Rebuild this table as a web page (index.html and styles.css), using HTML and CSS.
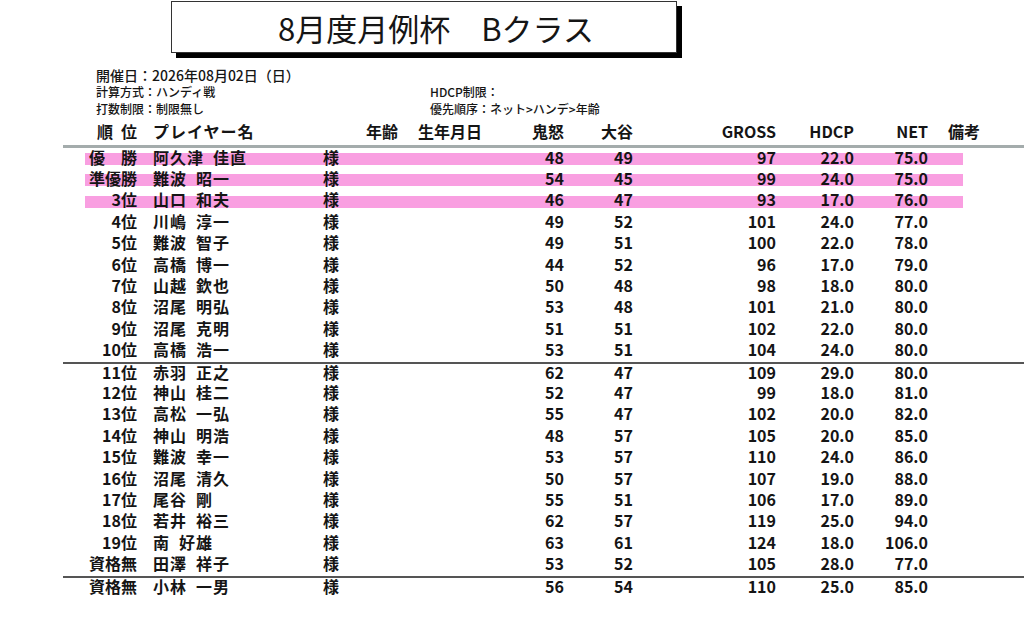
FILE: index.html
```html
<!DOCTYPE html>
<html lang="ja">
<head>
<meta charset="utf-8">
<title>8月度月例杯 Bクラス</title>
<link rel="stylesheet" href="styles.css">
</head>
<body>
<div class="title-wrap"><div class="title">8月度月例杯　Bクラス</div></div>
<div class="info">
  <div class="date">開催日：2026年08月02日（日）</div>
  <div class="meta">
    <div>計算方式：ハンディ戦</div><div>HDCP制限：</div>
    <div>打数制限：制限無し</div><div>優先順序：ネット&gt;ハンデ&gt;年齢</div>
  </div>
</div>
<div class="table">
  <div class="row head">
    <span class="r">順&ensp;位</span><span class="nm">プレイヤー名</span><span></span><span>年齢</span><span>生年月日</span><span class="r">鬼怒</span><span class="r">大谷</span><span class="r">GROSS</span><span class="r">HDCP</span><span class="r">NET</span><span class="note">備考</span>
  </div>
  <div class="row win"><span class="r">優　勝</span><span class="nm">阿久津&ensp;佳直</span><span>様</span><span></span><span></span><span class="r n">48</span><span class="r n">49</span><span class="r n">97</span><span class="r n">22.0</span><span class="r n">75.0</span><span></span></div>
  <div class="row win"><span class="r">準優勝</span><span class="nm">難波&ensp;昭一</span><span>様</span><span></span><span></span><span class="r n">54</span><span class="r n">45</span><span class="r n">99</span><span class="r n">24.0</span><span class="r n">75.0</span><span></span></div>
  <div class="row win"><span class="r">3位</span><span class="nm">山口&ensp;和夫</span><span>様</span><span></span><span></span><span class="r n">46</span><span class="r n">47</span><span class="r n">93</span><span class="r n">17.0</span><span class="r n">76.0</span><span></span></div>
  <div class="row"><span class="r">4位</span><span class="nm">川嶋&ensp;淳一</span><span>様</span><span></span><span></span><span class="r n">49</span><span class="r n">52</span><span class="r n">101</span><span class="r n">24.0</span><span class="r n">77.0</span><span></span></div>
  <div class="row"><span class="r">5位</span><span class="nm">難波&ensp;智子</span><span>様</span><span></span><span></span><span class="r n">49</span><span class="r n">51</span><span class="r n">100</span><span class="r n">22.0</span><span class="r n">78.0</span><span></span></div>
  <div class="row"><span class="r">6位</span><span class="nm">高橋&ensp;博一</span><span>様</span><span></span><span></span><span class="r n">44</span><span class="r n">52</span><span class="r n">96</span><span class="r n">17.0</span><span class="r n">79.0</span><span></span></div>
  <div class="row"><span class="r">7位</span><span class="nm">山越&ensp;欽也</span><span>様</span><span></span><span></span><span class="r n">50</span><span class="r n">48</span><span class="r n">98</span><span class="r n">18.0</span><span class="r n">80.0</span><span></span></div>
  <div class="row"><span class="r">8位</span><span class="nm">沼尾&ensp;明弘</span><span>様</span><span></span><span></span><span class="r n">53</span><span class="r n">48</span><span class="r n">101</span><span class="r n">21.0</span><span class="r n">80.0</span><span></span></div>
  <div class="row"><span class="r">9位</span><span class="nm">沼尾&ensp;克明</span><span>様</span><span></span><span></span><span class="r n">51</span><span class="r n">51</span><span class="r n">102</span><span class="r n">22.0</span><span class="r n">80.0</span><span></span></div>
  <div class="row"><span class="r">10位</span><span class="nm">高橋&ensp;浩一</span><span>様</span><span></span><span></span><span class="r n">53</span><span class="r n">51</span><span class="r n">104</span><span class="r n">24.0</span><span class="r n">80.0</span><span></span></div>
  <div class="row sep"><span class="r">11位</span><span class="nm">赤羽&ensp;正之</span><span>様</span><span></span><span></span><span class="r n">62</span><span class="r n">47</span><span class="r n">109</span><span class="r n">29.0</span><span class="r n">80.0</span><span></span></div>
  <div class="row"><span class="r">12位</span><span class="nm">神山&ensp;桂二</span><span>様</span><span></span><span></span><span class="r n">52</span><span class="r n">47</span><span class="r n">99</span><span class="r n">18.0</span><span class="r n">81.0</span><span></span></div>
  <div class="row"><span class="r">13位</span><span class="nm">高松&ensp;一弘</span><span>様</span><span></span><span></span><span class="r n">55</span><span class="r n">47</span><span class="r n">102</span><span class="r n">20.0</span><span class="r n">82.0</span><span></span></div>
  <div class="row"><span class="r">14位</span><span class="nm">神山&ensp;明浩</span><span>様</span><span></span><span></span><span class="r n">48</span><span class="r n">57</span><span class="r n">105</span><span class="r n">20.0</span><span class="r n">85.0</span><span></span></div>
  <div class="row"><span class="r">15位</span><span class="nm">難波&ensp;幸一</span><span>様</span><span></span><span></span><span class="r n">53</span><span class="r n">57</span><span class="r n">110</span><span class="r n">24.0</span><span class="r n">86.0</span><span></span></div>
  <div class="row"><span class="r">16位</span><span class="nm">沼尾&ensp;清久</span><span>様</span><span></span><span></span><span class="r n">50</span><span class="r n">57</span><span class="r n">107</span><span class="r n">19.0</span><span class="r n">88.0</span><span></span></div>
  <div class="row"><span class="r">17位</span><span class="nm">尾谷&ensp;剛</span><span>様</span><span></span><span></span><span class="r n">55</span><span class="r n">51</span><span class="r n">106</span><span class="r n">17.0</span><span class="r n">89.0</span><span></span></div>
  <div class="row"><span class="r">18位</span><span class="nm">若井&ensp;裕三</span><span>様</span><span></span><span></span><span class="r n">62</span><span class="r n">57</span><span class="r n">119</span><span class="r n">25.0</span><span class="r n">94.0</span><span></span></div>
  <div class="row"><span class="r">19位</span><span class="nm">南&ensp;好雄</span><span>様</span><span></span><span></span><span class="r n">63</span><span class="r n">61</span><span class="r n">124</span><span class="r n">18.0</span><span class="r n">106.0</span><span></span></div>
  <div class="row"><span class="r">資格無</span><span class="nm">田澤&ensp;祥子</span><span>様</span><span></span><span></span><span class="r n">53</span><span class="r n">52</span><span class="r n">105</span><span class="r n">28.0</span><span class="r n">77.0</span><span></span></div>
  <div class="row sep"><span class="r">資格無</span><span class="nm">小林&ensp;一男</span><span>様</span><span></span><span></span><span class="r n">56</span><span class="r n">54</span><span class="r n">110</span><span class="r n">25.0</span><span class="r n">85.0</span><span></span></div>
</div>
</body>
</html>
```
FILE: styles.css
```css
* { box-sizing: border-box; }
body {
  margin: 0;
  background: #fff;
  color: #151515;
  font-family: "Noto Sans CJK JP", "Noto Sans", sans-serif;
}
.title-wrap {
  padding-top: 1px;
  padding-left: 171px;
}
.title {
  width: 506px;
  height: 52px;
  border: 1px solid #333;
  box-shadow: 5px 5px 0 #000;
  background: #fff;
  display: flex;
  align-items: center;
  justify-content: center;
  padding-left: 24px;
  font-size: 31px;
  line-height: 1;
  font-weight: 400;
}
.info {
  margin-top: 15px;
  padding-left: 96px;
  font-weight: 500;
}
.date {
  font-size: 14px;
  line-height: 15px;
  height: 15px;
}
.meta {
  display: grid;
  grid-template-columns: 334px auto;
  font-size: 12px;
  line-height: 17px;
}
.table {
  margin-top: 4px;
  margin-left: 63px;
}
.row {
  display: grid;
  grid-template-columns: 74px 186px 43px 52px 72px 74px 69px 143px 78px 74px 1fr;
  align-items: center;
  height: 21.4px;
  padding-bottom: 3px;
  line-height: 17px;
  font-size: 16px;
  font-weight: 600;
  white-space: nowrap;
}
.head {
  height: 27px;
  padding-bottom: 4px;
  border-bottom: 3px solid #a4acac;
}
.r { text-align: right; }
.nm { padding-left: 16px; letter-spacing: 1px; }
.n { font-variant-numeric: tabular-nums; }
.note { padding-left: 20px; }
.win {
  background: linear-gradient(#f99fe1, #f99fe1) 22px 5px / 878px 12px no-repeat;
}
.sep { border-top: 2px solid #555; }
```
